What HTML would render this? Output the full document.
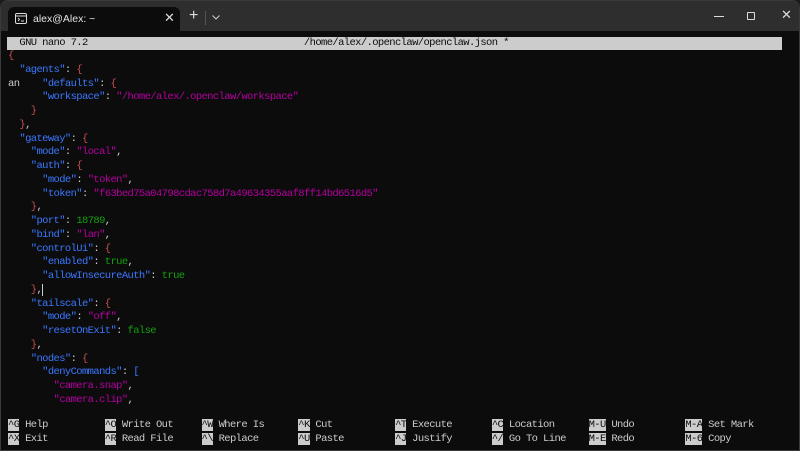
<!DOCTYPE html>
<html><head><meta charset="utf-8"><style>
*{margin:0;padding:0;box-sizing:border-box}
html,body{width:800px;height:451px;overflow:hidden;background:#1b1b1b}
#win{position:absolute;left:0;top:0;width:800px;height:451px;background:#0c0c0c;border:1px solid #3a3a3a;border-radius:8px 8px 0 0;overflow:hidden}
#tb{position:absolute;left:0;top:0;width:800px;height:30px;background:#2e2e2e}
#tab{position:absolute;left:7px;top:6px;width:172px;height:25px;background:#0c0c0c;border-radius:6px 6px 0 0;color:#e6e6e6;font:10.5px "Liberation Sans",sans-serif}
.t{position:absolute;font-family:"Liberation Mono",monospace;font-size:10.5px;letter-spacing:-0.61px;line-height:13.75px;white-space:pre;color:#cccccc}
.b{color:#3b78ff}.r{color:#c74f4f}.m{color:#b4009e}.g{color:#13a10e}
.k{background:#cccccc;color:#0c0c0c}
</style></head><body>
<div id="win">
<div id="tb">
 <div id="tab">
  <svg style="position:absolute;left:7px;top:6px" width="12" height="11" viewBox="0 0 12 11"><rect x="0.5" y="0.5" width="11" height="10" rx="1.5" fill="none" stroke="#ddd"/><line x1="0.5" y1="3" x2="11.5" y2="3" stroke="#ddd"/><path d="M3 5l1.5 1.5L3 8" fill="none" stroke="#ddd" stroke-width="0.9"/><line x1="6" y1="8" x2="9" y2="8" stroke="#ddd" stroke-width="0.9"/></svg>
  <span style="position:absolute;left:25px;top:6px">alex@Alex: ~</span>
  <span style="position:absolute;left:156px;top:3px;font-size:13px;color:#ddd">✕</span>
 </div>
 <span style="position:absolute;left:188px;top:6px;color:#ddd;font:16px 'Liberation Sans',sans-serif">+</span>
 <div style="position:absolute;left:204px;top:10px;width:1px;height:14px;background:#555"></div>
 <svg style="position:absolute;left:211px;top:14px" width="8" height="5"><path d="M0.5 0.5L4 4L7.5 0.5" fill="none" stroke="#ccc"/></svg>
 <div style="position:absolute;left:713px;top:15px;width:10px;height:1px;background:#ddd"></div>
 <div style="position:absolute;left:746px;top:11px;width:8px;height:8px;border:1px solid #ddd;border-radius:1px"></div>
 <span style="position:absolute;left:780px;top:6px;color:#ddd;font:13px 'Liberation Sans',sans-serif">✕</span>
</div>
<div style="position:absolute;left:6px;top:36px;width:775px;height:13px;background:#cccccc"></div>
<div class="t" style="left:7px;top:35.5px;color:#0c0c0c">  GNU nano 7.2                                      /home/alex/.openclaw/openclaw.json *</div>
<div class="t" style="left:7px;top:49px"><span class="r">{</span>
  <span class="b">"agents"</span>: <span class="r">{</span>
an    <span class="b">"defaults"</span>: <span class="r">{</span>
      <span class="b">"workspace"</span>: <span class="m">"/home/alex/.openclaw/workspace"</span>
    <span class="r">}</span>
  <span class="r">}</span>,
  <span class="b">"gateway"</span>: <span class="r">{</span>
    <span class="b">"mode"</span>: <span class="m">"local"</span>,
    <span class="b">"auth"</span>: <span class="r">{</span>
      <span class="b">"mode"</span>: <span class="m">"token"</span>,
      <span class="b">"token"</span>: <span class="m">"f63bed75a04798cdac758d7a49634355aaf8ff14bd6516d5"</span>
    <span class="r">}</span>,
    <span class="b">"port"</span>: <span class="g">18789</span>,
    <span class="b">"bind"</span>: <span class="m">"lan"</span>,
    <span class="b">"controlUi"</span>: <span class="r">{</span>
      <span class="b">"enabled"</span>: <span class="g">true</span>,
      <span class="b">"allowInsecureAuth"</span>: <span class="g">true</span>
    <span class="r">}</span>,<span style="border-left:1px solid #ccc"> </span>
    <span class="b">"tailscale"</span>: <span class="r">{</span>
      <span class="b">"mode"</span>: <span class="m">"off"</span>,
      <span class="b">"resetOnExit"</span>: <span class="g">false</span>
    <span class="r">}</span>,
    <span class="b">"nodes"</span>: <span class="r">{</span>
      <span class="b">"denyCommands"</span>: <span class="b">[</span>
        <span class="m">"camera.snap"</span>,
        <span class="m">"camera.clip"</span>,</div>
<div class="t" style="left:7px;top:418px"><span class="k">^G</span> Help          <span class="k">^O</span> Write Out     <span class="k">^W</span> Where Is      <span class="k">^K</span> Cut           <span class="k">^T</span> Execute       <span class="k">^C</span> Location      <span class="k">M-U</span> Undo         <span class="k">M-A</span> Set Mark
<span class="k">^X</span> Exit          <span class="k">^R</span> Read File     <span class="k">^\</span> Replace       <span class="k">^U</span> Paste         <span class="k">^J</span> Justify       <span class="k">^/</span> Go To Line    <span class="k">M-E</span> Redo         <span class="k">M-6</span> Copy</div>
</div>
</body></html>
